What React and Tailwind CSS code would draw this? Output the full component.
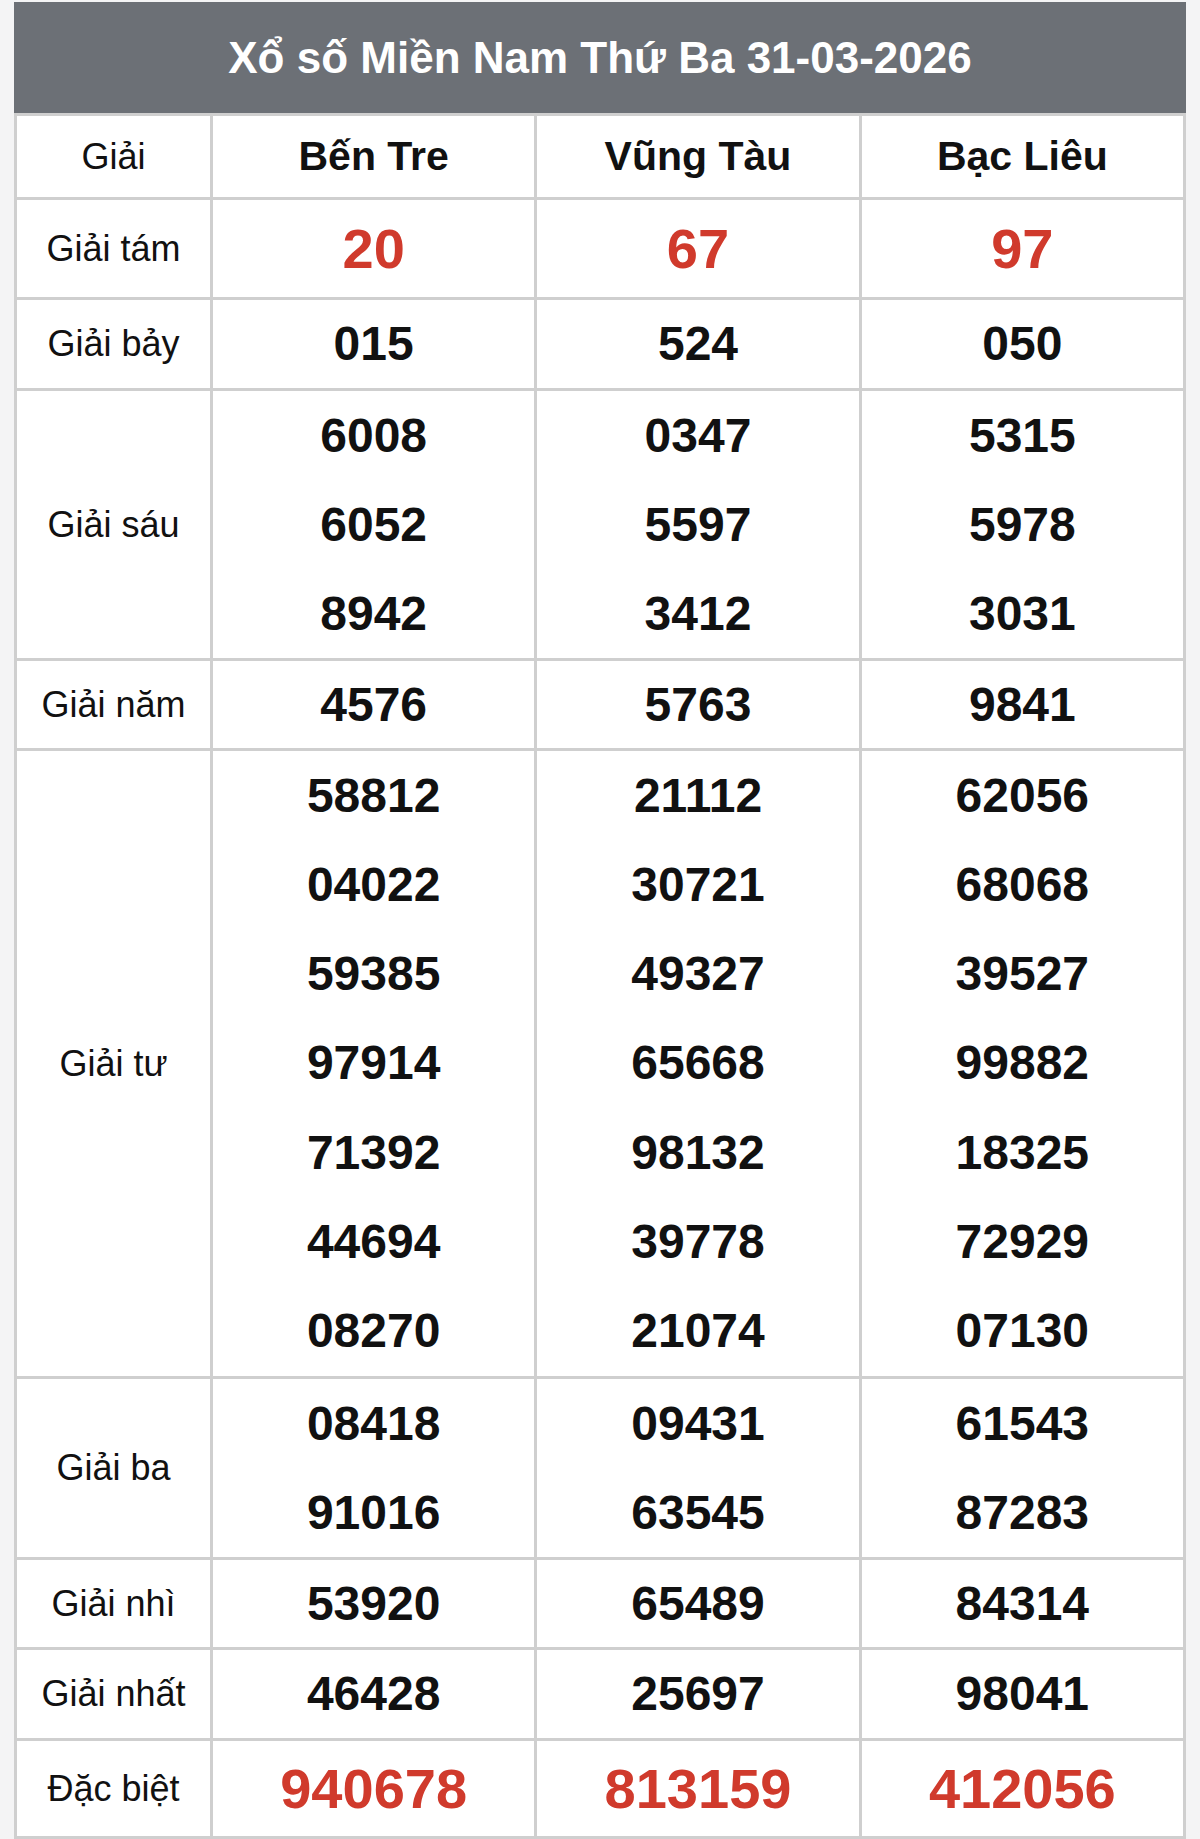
import React from "react";

const RED = "text-[#d03a2c]";

const rows = [
  { label: "Giải tám", h: 97, lines: [["20", "67", "97"]], big: true },
  { label: "Giải bảy", h: 88, lines: [["015", "524", "050"]] },
  {
    label: "Giải sáu",
    h: 267,
    lines: [
      ["6008", "0347", "5315"],
      ["6052", "5597", "5978"],
      ["8942", "3412", "3031"],
    ],
  },
  { label: "Giải năm", h: 87, lines: [["4576", "5763", "9841"]] },
  {
    label: "Giải tư",
    h: 625,
    lines: [
      ["58812", "21112", "62056"],
      ["04022", "30721", "68068"],
      ["59385", "49327", "39527"],
      ["97914", "65668", "99882"],
      ["71392", "98132", "18325"],
      ["44694", "39778", "72929"],
      ["08270", "21074", "07130"],
    ],
  },
  {
    label: "Giải ba",
    h: 178,
    lines: [
      ["08418", "09431", "61543"],
      ["91016", "63545", "87283"],
    ],
  },
  { label: "Giải nhì", h: 87, lines: [["53920", "65489", "84314"]] },
  { label: "Giải nhất", h: 88, lines: [["46428", "25697", "98041"]] },
  { label: "Đặc biệt", h: 95, lines: [["940678", "813159", "412056"]], big: true },
];

function NumCell({ values, big, h }) {
  return (
    <div className="bg-white flex flex-col" style={{ height: h }}>
      {values.map((v, i) => (
        <div
          key={i}
          className={
            big
              ? `flex-1 flex items-center justify-center font-bold text-[56px] leading-none ${RED}`
              : "flex-1 flex items-center justify-center font-bold text-[48px] leading-none text-[#111111]"
          }
        >
          {v}
        </div>
      ))}
    </div>
  );
}

export default function App() {
  return (
    <div
      className="w-[1200px] h-[1839px] bg-[#f4f4f5] overflow-hidden"
      style={{ fontFamily: '"Liberation Sans", Arial, sans-serif' }}
    >
      <div className="ml-[14px] w-[1172px] pt-[2px]">
        <div className="h-[111px] bg-[#6c7076] flex items-center justify-center">
          <span className="text-white font-bold text-[44px] leading-none">
            Xổ số Miền Nam Thứ Ba 31-03-2026
          </span>
        </div>
        <div className="grid grid-cols-[193px_1fr_1fr_1fr] gap-[3px] p-[3px] bg-[#cfcfcf]">
          <div className="h-[81px] bg-white flex items-center justify-center text-[36px] text-[#111111]">
            Giải
          </div>
          {["Bến Tre", "Vũng Tàu", "Bạc Liêu"].map((p) => (
            <div
              key={p}
              className="h-[81px] bg-white flex items-center justify-center text-[41px] font-bold text-[#111111]"
            >
              {p}
            </div>
          ))}
          {rows.map((r) => (
            <React.Fragment key={r.label}>
              <div
                className="bg-white flex items-center justify-center text-[36px] text-[#111111]"
                style={{ height: r.h }}
              >
                {r.label}
              </div>
              {[0, 1, 2].map((c) => (
                <NumCell
                  key={c}
                  h={r.h}
                  big={r.big}
                  values={r.lines.map((l) => l[c])}
                />
              ))}
            </React.Fragment>
          ))}
        </div>
      </div>
    </div>
  );
}
